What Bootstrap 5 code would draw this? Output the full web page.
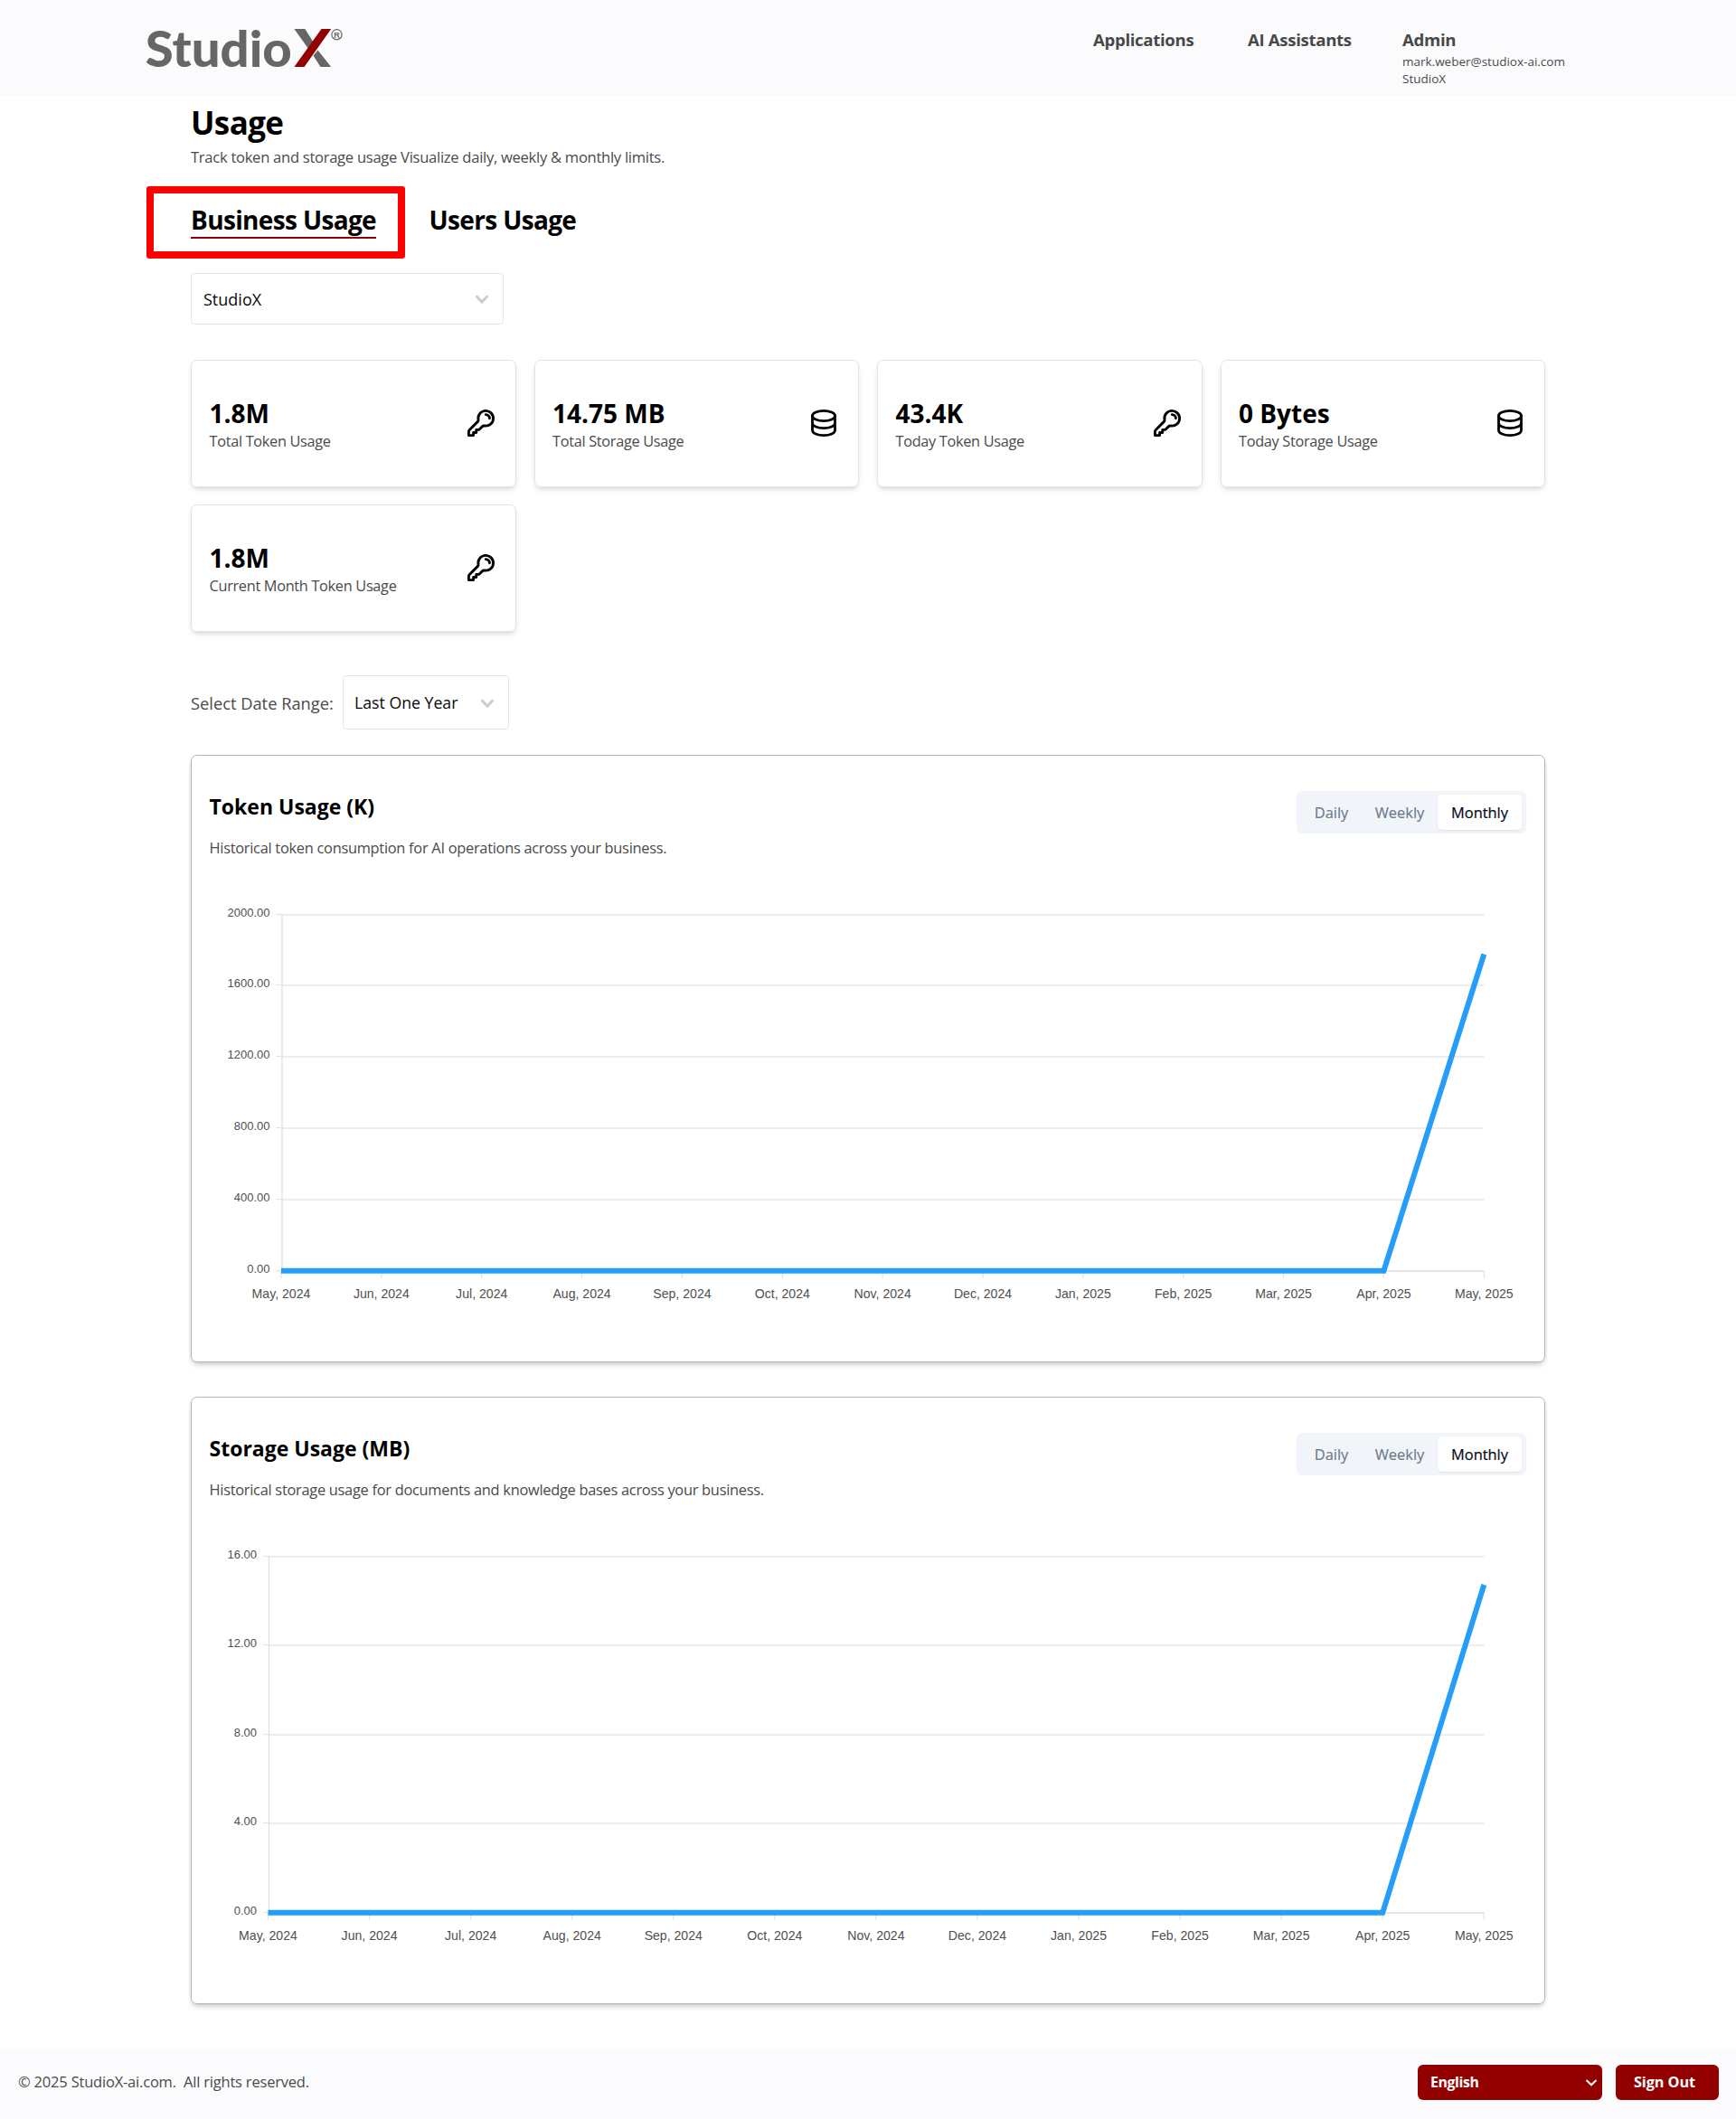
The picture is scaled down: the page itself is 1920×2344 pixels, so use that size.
<!DOCTYPE html>
<html lang="en">
<head>
<meta charset="utf-8">
<meta name="viewport" content="width=device-width, initial-scale=1">
<title>StudioX - Usage</title>
<link href="https://cdn.jsdelivr.net/npm/bootstrap@5.3.0/dist/css/bootstrap.min.css" rel="stylesheet">
<style>
body{font-family:"Open Sans","Noto Sans",sans-serif;color:#4a4a4a;background:#fff}
.site-header{height:106px;background:#fbfbfd;padding:0 0 0 151px}
.brand-logo{margin-top:15px}
.top-nav{padding-top:30px;width:711px}
.nav-entry{font-size:18.6px;font-weight:700;line-height:28.5px;letter-spacing:-.32px;color:#484848;text-decoration:none;white-space:nowrap}
.nav-apps{width:171px}.nav-ai{width:171px}
.nav-meta{font-size:13.5px;line-height:19px}
.page-main{width:1498px;margin-left:211px;padding-top:6px}
.page-title{font-size:35px;line-height:47px;font-weight:700;letter-spacing:-.6px;color:#000}
.page-sub{font-size:16.6px;line-height:24px;letter-spacing:-.29px;margin-top:3px}
.usage-tabs{margin-top:38px;gap:58.5px}
.usage-tab{position:relative;height:40px;font-size:28px;line-height:39px;font-weight:700;letter-spacing:-.65px;color:#000;border-bottom:2px solid transparent}
.usage-tab.current{border-color:#920000}
.usage-tab.current::after{content:"";position:absolute;left:-49px;top:-18px;width:286px;height:80px;border:8px solid #f00;border-radius:3px}
.select-box{border:1px solid #e5e5e5;border-radius:4px;color:#0a0a0a;background:#fff}
.biz-select{width:346px;height:57px;margin-top:38px;padding:1px 14px 0 13px;font-size:18px}
.range-select{width:184px;height:60px;padding:1px 14px 0 12px;font-size:17.7px}
.range-row{margin-top:48px}
.range-label{width:168px;padding-top:1px;font-size:18.3px;white-space:nowrap}
.stat-row{--bs-gutter-x:20px;--bs-gutter-y:19px;margin-top:20px}
.stat-card{height:141px;border:1px solid #e4e4e4;border-radius:7px;padding:0 20px 0 19.5px;box-shadow:0 4px 6px -1px rgba(0,0,0,.1),0 2px 4px -1px rgba(0,0,0,.07)}
.stat-num{font-size:28px;line-height:36px;font-weight:700;color:#000}
.stat-name{font-size:16.3px;line-height:24px;letter-spacing:-.3px;padding-top:1px;margin-bottom:-1px}
.stat-icon{width:36px;height:36px;margin-bottom:1px;fill:none;stroke:#000;stroke-linecap:round;stroke-linejoin:round}
.chart-card{height:672px;border:1px solid #b4b4b4;border-radius:7px;padding:39px 20px 0 19.5px;box-shadow:0 4px 6px -1px rgba(0,0,0,.14),0 2px 4px -1px rgba(0,0,0,.1)}
.chart-title{font-size:23px;line-height:34px;font-weight:700;color:#000}
.chart-sub{font-size:16.4px;line-height:24px;letter-spacing:-.28px;margin-top:17px}
.seg{background:#f1f5f9;border-radius:6px;padding:4px 5px;height:47px;font-size:16.4px;font-weight:500;color:#6f7b8f}
.seg-item{height:39px;line-height:40px;text-align:center;border-radius:5px}
.seg-d{width:67px}.seg-w{width:84px}
.seg-m{width:93px;background:#fff;color:#020817;box-shadow:0 1px 2px rgba(0,0,0,.08)}
.seg-item{-webkit-text-stroke:.2px currentColor}
.plot{display:block;margin-top:24px;width:1456px;height:500px;font-family:"Liberation Sans",Arial,sans-serif}
.site-footer{margin-top:48px;height:79px;background:#fbfbfd;padding:0 19px 2px 20px;font-size:16.5px}
.foot-note{letter-spacing:-.2px}
.foot-btn{height:38.5px;background:#920000;color:#fff;border-radius:6px;font-weight:700;font-size:15.8px;letter-spacing:-.1px}
.lang{width:204px;padding:0 5px 0 14px;letter-spacing:-.35px}
.signout{width:114px;padding-left:20px;font-size:16.3px}
</style>
</head>
<body>
<header class="site-header d-flex justify-content-between align-items-start">
  <svg class="brand-logo" width="242" height="76" viewBox="151 15 242 76" role="img" aria-label="StudioX">
    <text x="160.8" y="74.2" font-family="Lato,sans-serif" font-weight="900" font-size="56" fill="#666" textLength="162" lengthAdjust="spacingAndGlyphs">Studio</text>
    <path fill="#666" d="M325.400 32H337.300L346.500 46.500 341.500 54.500ZM351.500 55.500 366.200 74H354.500L346.500 61.500Z"/>
    <path fill="#920000" d="M355.500 32H366.200L336.500 74H325.400Z"/>
    <circle cx="372.500" cy="38.300" r="5.600" fill="none" stroke="#666" stroke-width="1.200"/>
    <text x="372.600" y="41.600" text-anchor="middle" font-family="Liberation Sans,sans-serif" font-weight="700" font-size="9" fill="#666">R</text>
  </svg>
  <nav class="top-nav d-flex">
    <a class="nav-entry nav-apps" href="#">Applications</a>
    <a class="nav-entry nav-ai" href="#">AI Assistants</a>
    <div><div class="nav-entry">Admin</div><div class="nav-meta">mark.weber@studiox-ai.com</div><div class="nav-meta">StudioX</div></div>
  </nav>
</header>

<main class="page-main">
  <h1 class="page-title mb-0">Usage</h1>
  <p class="page-sub mb-0">Track token and storage usage Visualize daily, weekly &amp; monthly limits.</p>
  <div class="usage-tabs d-flex"><div class="usage-tab current">Business Usage</div><div class="usage-tab">Users Usage</div></div>
  <div class="select-box biz-select d-flex align-items-center justify-content-between"><span>StudioX</span>
    <svg width="18" height="12" viewBox="0 0 18 12" fill="none" stroke="#ccc" stroke-width="3" stroke-linecap="round"><path d="M3.500 3.200 9 9 14.500 3.200"/></svg></div>

  <svg class="d-none">
    <symbol id="ic-key" viewBox="-.9 -.9 25.8 25.8"><path stroke-width="2.05" d="M15.75 5.25a3 3 0 0 1 3 3m3 0a6 6 0 0 1-7.029 5.912c-.563-.097-1.159.026-1.563.43L10.5 17.25H8.25v2.25H6v2.25H2.25v-2.818c0-.597.237-1.17.659-1.591l6.499-6.499c.404-.404.527-1 .43-1.563A6 6 0 1 1 21.75 8.25z"/></symbol>
    <symbol id="ic-db" viewBox="0 0 36 36"><g stroke-width="2.8"><ellipse cx="18" cy="10" rx="12.5" ry="5.7"/><path d="M5.5 10v16c0 3.1 5.6 5.6 12.5 5.6s12.500-2.500 12.500-5.600V10M5.500 18c0 3.100 5.600 5.600 12.500 5.600s12.500-2.500 12.500-5.600"/></g></symbol>
  </svg>
  <div class="row row-cols-4 stat-row">
    <div class="col"><div class="stat-card d-flex align-items-center justify-content-between"><div><div class="stat-num">1.8M</div><div class="stat-name">Total Token Usage</div></div><svg class="stat-icon"><use href="#ic-key"/></svg></div></div>
    <div class="col"><div class="stat-card d-flex align-items-center justify-content-between"><div><div class="stat-num">14.75 MB</div><div class="stat-name">Total Storage Usage</div></div><svg class="stat-icon"><use href="#ic-db"/></svg></div></div>
    <div class="col"><div class="stat-card d-flex align-items-center justify-content-between"><div><div class="stat-num">43.4K</div><div class="stat-name">Today Token Usage</div></div><svg class="stat-icon"><use href="#ic-key"/></svg></div></div>
    <div class="col"><div class="stat-card d-flex align-items-center justify-content-between"><div><div class="stat-num">0 Bytes</div><div class="stat-name">Today Storage Usage</div></div><svg class="stat-icon"><use href="#ic-db"/></svg></div></div>
    <div class="col"><div class="stat-card d-flex align-items-center justify-content-between"><div><div class="stat-num">1.8M</div><div class="stat-name">Current Month Token Usage</div></div><svg class="stat-icon"><use href="#ic-key"/></svg></div></div>
  </div>

  <div class="range-row d-flex align-items-center"><span class="range-label">Select Date Range:</span>
    <div class="select-box range-select d-flex align-items-center justify-content-between"><span>Last One Year</span>
    <svg width="18" height="12" viewBox="0 0 18 12" fill="none" stroke="#ccc" stroke-width="3" stroke-linecap="round"><path d="M3.500 3.200 9 9 14.500 3.200"/></svg></div></div>

  <section class="chart-card" style="margin-top:28px">
    <div class="d-flex justify-content-between align-items-start"><div><h2 class="chart-title mb-0">Token Usage (K)</h2><p class="chart-sub mb-0">Historical token consumption for AI operations across your business.</p></div>
    <div class="seg d-flex"><div class="seg-item seg-d">Daily</div><div class="seg-item seg-w">Weekly</div><div class="seg-item seg-m">Monthly</div></div></div>
    <svg class="plot" id="tokenPlot" viewBox="0 0 1456 500"></svg>
  </section>
  <section class="chart-card" style="margin-top:38px">
    <div class="d-flex justify-content-between align-items-start"><div><h2 class="chart-title mb-0">Storage Usage (MB)</h2><p class="chart-sub mb-0">Historical storage usage for documents and knowledge bases across your business.</p></div>
    <div class="seg d-flex"><div class="seg-item seg-d">Daily</div><div class="seg-item seg-w">Weekly</div><div class="seg-item seg-m">Monthly</div></div></div>
    <svg class="plot" id="storagePlot" viewBox="0 0 1456 500"></svg>
  </section>
</main>

<footer class="site-footer d-flex align-items-center justify-content-between">
  <span class="foot-note">© 2025 StudioX-ai.com.&nbsp; All rights reserved.</span>
  <div class="d-flex" style="gap:15px">
    <div class="foot-btn lang d-flex align-items-center justify-content-between"><span>English</span><svg width="14" height="10" viewBox="0 0 14 10" fill="none" stroke="#fff" stroke-width="2"><path d="M1.500 2 7 7.300 12.500 2"/></svg></div>
    <div class="foot-btn signout d-flex align-items-center">Sign Out</div>
  </div>
</footer>
<script src="https://cdn.jsdelivr.net/npm/bootstrap@5.3.0/dist/js/bootstrap.bundle.min.js"></script>
<script>
const months=['May, 2024','Jun, 2024','Jul, 2024','Aug, 2024','Sep, 2024','Oct, 2024','Nov, 2024','Dec, 2024','Jan, 2025','Feb, 2025','Mar, 2025','Apr, 2025','May, 2025'];
function drawPlot(id,left,labels,peak){
  const top=37.5,zero=431.7,right=1409.3,n=labels.length-1,step=(right-left)/12;
  let s='';
  labels.forEach((t,i)=>{
    const y=Math.round(top+(zero-top)*i/n);
    s+=`<path d="M${left} ${y}H${right}" stroke="#ededed" stroke-width="2"/>`;
    s+=`<path d="M${left-5.5} ${y-.5}h6" stroke="#e3e3e3" stroke-width="1.2"/>`;
    s+=`<text x="${left-12.5}" y="${y+1.8}" text-anchor="end" font-size="13" fill="#505050">${t}</text>`;
  });
  s+=`<path d="M${left+1} ${top}V${zero}M${left} ${zero+.5}H${right}" stroke="#e0e0e0" stroke-width="1.3" fill="none"/>`;
  months.forEach((m,i)=>{
    const x=left+i*step;
    s+=`<path d="M${x} ${zero}v8" stroke="#e0e0e0" stroke-width="1.2"/>`;
    s+=`<text x="${x}" y="${zero+30.5}" text-anchor="middle" font-size="14.1" fill="#505050">${m}</text>`;
  });
  s+=`<path d="M${left} ${zero}H${right-step}L${right} ${peak}" fill="none" stroke="#259efb" stroke-width="6"/>`;
  document.getElementById(id).innerHTML=s;
}
drawPlot('tokenPlot',79,['2000.00','1600.00','1200.00','800.00','400.00','0.00'],81.5);
drawPlot('storagePlot',64.5,['16.00','12.00','8.00','4.00','0.00'],69);
</script>
</body>
</html>
